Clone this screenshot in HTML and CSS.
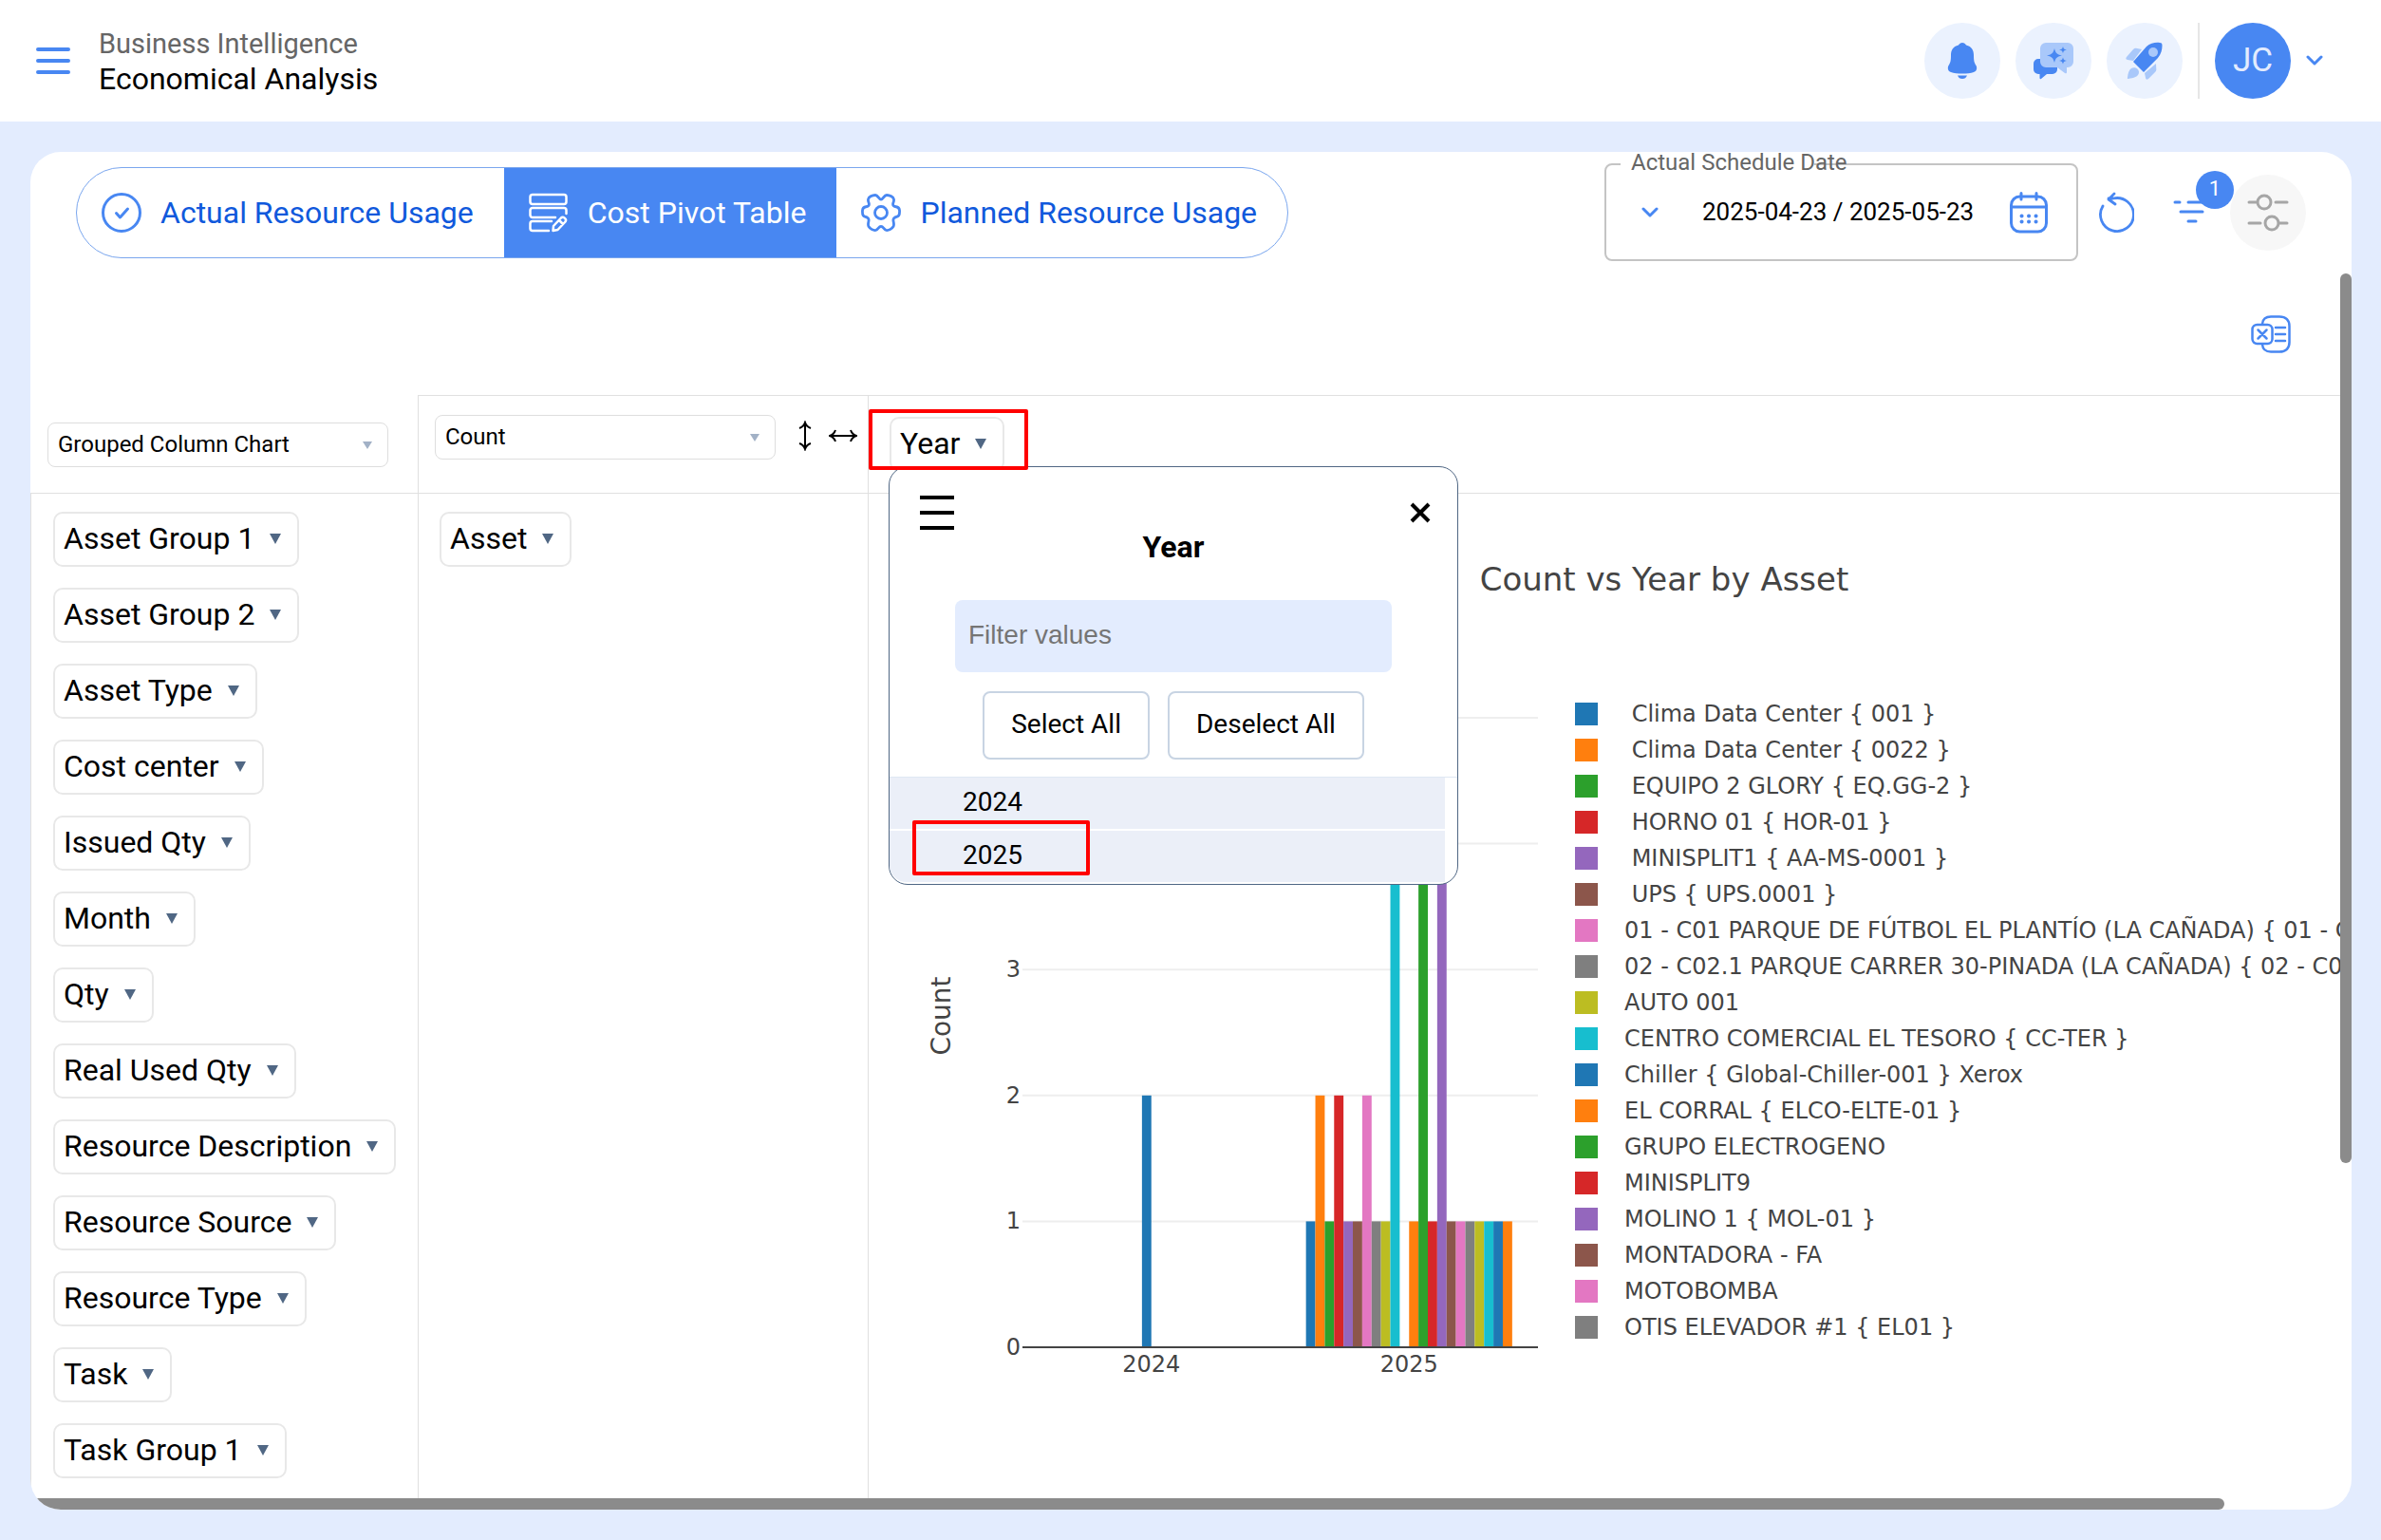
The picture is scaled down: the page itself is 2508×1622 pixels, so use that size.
FILE: index.html
```html
<!DOCTYPE html>
<html lang="en">
<head>
    <meta charset="UTF-8">
    <meta name="viewport" content="width=device-width, initial-scale=1.0">
    <title>Economical Analysis</title>
    <link rel="stylesheet" href="styles.css">
</head>
<body>
<header class="topbar">
    <button type="button" class="icon-btn menu-btn" aria-label="Menu">
        <svg width="36" height="30" viewBox="0 0 36 30" stroke="#4887f2" stroke-width="4" stroke-linecap="round"><path d="M2 3h32M2 15h32M2 27h32"/></svg>
    </button>
    <div class="titles">
        <p class="module">Business Intelligence</p>
        <h1>Economical Analysis</h1>
    </div>
    <div class="top-actions">
        <button type="button" class="round-btn" aria-label="Notifications">
            <svg width="32" height="40" viewBox="0 0 32 40" fill="#4887f2"><path d="M16 1c2 0 3 1 4 2.500C26 5 28 9 28 14c0 6 .5 8 2.500 11C32 28 31 31 28 32c-6 2-18 2-24 0-3-1-4-4-2.500-7C3.500 22 4 20 4 14c0-5 2-9 8-10.500C13 2 14 1 16 1z"/><path d="M11 35.500h10c-1 2.500-2.500 3.500-5 3.500s-4-1-5-3.500z"/></svg>
        </button>
        <button type="button" class="round-btn" aria-label="Assistant">
            <svg width="42" height="40" viewBox="0 0 42 40"><path fill="#4887f2" d="M5 18h15a5 5 0 0 1 5 5v6a5 5 0 0 1-5 5h-6l-6 5c-1 .5-1.500 0-1.500-1v-4H5a5 5 0 0 1-5-5v-6a5 5 0 0 1 5-5z"/><path fill="#a9c8fa" d="M13 1h23a6 6 0 0 1 6 6v14a6 6 0 0 1-6 6h-1v5c0 1.500-1 1.500-2 1l-8-6H13a6 6 0 0 1-6-6V7a6 6 0 0 1 6-6z"/><path fill="#4887f2" d="M22 7c1.500 5 2 6 8 7.500-6 1.500-6.500 2.500-8 7.500-1.500-5-2-6-8-7.500 6-1.500 6.500-2.500 8-7.500zM31 5c.8 2.500 1 3 4 3.500-3 .6-3.200 1-4 3.500-.8-2.500-1-3-4-3.500 3-.5 3.200-1 4-3.500zM31 16.500c.8 2.500 1 3 4 3.500-3 .6-3.200 1-4 3.500-.8-2.500-1-3-4-3.500 3-.5 3.200-1 4-3.500z"/></svg>
        </button>
        <button type="button" class="round-btn" aria-label="What's new">
            <svg width="40" height="40" viewBox="0 0 40 40"><g fill="#a9c8fa"><path d="M17 8L8 20l-6-1c-2-.5-2-1.500-1-3l7-8c1-1 2-1.500 3-1.300z"/><path d="M32 23L20 33l1 5c.5 2 1.500 2 3 1l7-7c1-1 1.500-2 1.300-3z"/><path d="M6 28c3-2 8 0 8 4 0 5-6 6-11 7-1 0-1.300-.5-1-1.500C2.500 33 3.500 29.500 6 28z"/></g><path fill="#4887f2" d="M8 21L22 5c4-4 10-4.500 14-4 2 .2 2.500 1 2.500 3 0 4-1 9-4.500 13L19 32z"/><circle cx="29" cy="11" r="5" fill="#a9c8fa"/></svg>
        </button>
        <span class="divider"></span>
        <button type="button" class="avatar">JC</button>
        <button type="button" class="icon-btn user-btn" aria-label="User menu">
            <svg width="18" height="12" viewBox="0 0 18 12" fill="none" stroke="#4887f2" stroke-width="3" stroke-linecap="round" stroke-linejoin="round"><path d="M2 2l7 7 7-7"/></svg>
        </button>
    </div>
</header>

<main class="page">
    <section class="card">
        <div class="toolbar">
            <nav class="tabs">
                <button type="button" class="tab">
                    <svg width="42" height="44" viewBox="0 0 42 44" fill="none" stroke="#4887f2" stroke-width="3" stroke-linecap="round" stroke-linejoin="round"><circle cx="21" cy="22" r="19.500"/><path d="M15.500 22.500l4 4.500 8-9"/></svg>
                    Actual Resource Usage
                </button>
                <button type="button" class="tab active">
                    <svg width="42" height="42" viewBox="0 0 42 42" fill="none" stroke="#fff" stroke-width="2.500" stroke-linecap="round" stroke-linejoin="round"><rect x="1.500" y="2" width="38" height="10" rx="2.500"/><path d="M28 26H4a2.500 2.500 0 0 1-2.500-2.500v-5A2.500 2.500 0 0 1 4 16h33a2.500 2.500 0 0 1 2.500 2.500V22"/><path d="M24 30H4a2.500 2.500 0 0 0-2.500 2.500v5A2.500 2.500 0 0 0 4 40h17"/><path d="M26 35l8-8.500c2-2 6.500 1 4.500 4l-8 8.500-5 1zM32 29l4 4"/></svg>
                    Cost Pivot Table
                </button>
                <button type="button" class="tab">
                    <svg width="42" height="42" viewBox="0 0 42 42" fill="none" stroke="#4887f2" stroke-width="2.800" stroke-linejoin="round"><circle cx="21" cy="21" r="6.500"/><path d="M21 7c2.500 0 3-4.500 6-4.500 3.500 0 7 2 7.500 4.500.5 3-2 4-.5 6.500s6-.5 6.500 5c.3 4 0 6-2.500 6.700-2 .6-3.500.8-4 2.800-.6 2.500 1.500 4.500 0 7.500-1.500 2.500-5 4.500-7.500 4-2.500-.6-3-4-5.500-4s-3 3.400-5.500 4c-2.500.5-6-1.500-7.500-4-1.500-3 .6-5 0-7.500-.5-2-2-2.200-4-2.800C1.500 24.500 1.200 22.500 1.500 18.500c.5-5.500 5-2.500 6.500-5S7 10 7.500 7C8 4.500 11.500 2.500 15 2.500c3 0 3.500 4.500 6 4.500z"/></svg>
                    Planned Resource Usage
                </button>
            </nav>

            <fieldset class="date-field">
                <legend>Actual Schedule Date</legend>
                <div class="date-row">
                    <button type="button" class="icon-btn" aria-label="Presets">
                        <svg width="18" height="12" viewBox="0 0 18 12" fill="none" stroke="#4887f2" stroke-width="3" stroke-linecap="round" stroke-linejoin="round"><path d="M2 2l7 7 7-7"/></svg>
                    </button>
                    <input type="text" class="date-input" aria-label="Actual Schedule Date" value="2025-04-23 / 2025-05-23">
                    <button type="button" class="icon-btn" aria-label="Calendar">
                        <svg width="40" height="44" viewBox="0 0 40 44" fill="none" stroke="#4887f2" stroke-width="3" stroke-linecap="round"><rect x="1.500" y="5" width="37" height="37" rx="9"/><path d="M2 16h36M12 1.500V8M28 1.500V8"/><path stroke-width="4" d="M12.500 25.500h.1M20 25.500h.1M27.500 25.500h.1M12.500 31.500h.1M20 31.500h.1M27.500 31.500h.1"/></svg>
                    </button>
                </div>
            </fieldset>
            <button type="button" class="tool-btn" aria-label="Refresh">
                <svg width="38" height="44" viewBox="0 0 38 44" fill="none" stroke="#4887f2" stroke-width="2.800" stroke-linecap="round" stroke-linejoin="round"><path d="M5 15A17.500 17.500 0 1 0 16 7l-5 0M17 2l-6 6 7 5"/></svg>
            </button>
            <button type="button" class="tool-btn" aria-label="Filters">
                <svg width="40" height="26" viewBox="0 0 40 26" fill="none" stroke="#4887f2" stroke-width="3" stroke-linecap="round"><path d="M2 2h5M16 2h20M8 12h23M16 22h8"/></svg>
                <span class="badge">1</span>
            </button>
            <button type="button" class="tool-btn settings" aria-label="Settings">
                <svg width="44" height="40" viewBox="0 0 44 40" fill="none" stroke="#a6a6a6" stroke-width="3" stroke-linecap="round"><circle cx="18" cy="9" r="7"/><circle cx="26" cy="31" r="7"/><path d="M2 9h8M30 9h12M2 31h12M34 31h8"/></svg>
            </button>
        </div>

        <div class="scroll-area">
            <div class="content">
                <div class="export-row">
                    <button type="button" class="icon-btn" aria-label="Export to Excel">
                        <svg width="42" height="40" viewBox="0 0 42 40" fill="none" stroke="#4887f2" stroke-width="2.500" stroke-linecap="round" stroke-linejoin="round"><rect x="1.500" y="10" width="21" height="20" rx="5"/><path d="M7.500 15.500l9 9M16.500 15.500l-9 9M12 9c.5-5 4-7.500 9-7.500h9c7 0 10.500 4 10.500 10v17c0 6-3.500 10-10.500 10h-9c-5 0-8.500-2.500-9-7.500M26 13h10M26 20h10M26 27h10"/></svg>
                    </button>
                </div>

                <div class="pivot">
                    <div class="cell renderer-cell">
                        <div class="dropdown">
                            <select aria-label="Renderer"><option>Grouped Column Chart</option></select>
                        </div>
                    </div>
                    <div class="cell vals-cell">
                        <div class="dropdown">
                            <select aria-label="Aggregator"><option>Count</option></select>
                        </div>
                        <button type="button" class="icon-btn" aria-label="Row order">
                            <svg width="14" height="32" viewBox="0 0 14 32" fill="none" stroke="#000" stroke-width="2"><path d="M7 2v28M1 8c3-1 5-3 6-6 1 3 3 5 6 6M1 24c3 1 5 3 6 6 1-3 3-5 6-6"/></svg>
                        </button>
                        <button type="button" class="icon-btn" aria-label="Column order">
                            <svg width="30" height="14" viewBox="0 0 30 14" fill="none" stroke="#000" stroke-width="2"><path d="M1 7h28M7 1C6 4 4 6 1 7c3 1 5 3 6 6M23 1c1 3 3 5 6 6-3 1-5 3-6 6"/></svg>
                        </button>
                    </div>
                    <div class="cell cols-cell">
                        <button type="button" class="attr">Year</button>
                        <div class="filter-box">
                            <div class="filter-head">
                                <svg width="36" height="36" viewBox="0 0 36 36" stroke="#000" stroke-width="4"><path d="M0 2h36M0 18h36M0 34h36"/></svg>
                                <button type="button" class="icon-btn" aria-label="Close">
                                    <svg width="22" height="22" viewBox="0 0 22 22" stroke="#000" stroke-width="4"><path d="M2 2l18 18M20 2L2 20"/></svg>
                                </button>
                            </div>
                            <h4>Year</h4>
                            <input type="text" class="filter-input" placeholder="Filter values" aria-label="Filter values">
                            <div class="filter-btns">
                                <button type="button">Select All</button>
                                <button type="button">Deselect All</button>
                            </div>
                            <ul class="filter-list">
                                <li>2024</li>
                                <li>2025</li>
                            </ul>
                            <span class="mark mark-value"></span>
                        </div>
                        <span class="mark mark-year"></span>
                    </div>

                    <div class="cell unused-cell">
                        <button type="button" class="attr">Asset Group 1</button>
                        <button type="button" class="attr">Asset Group 2</button>
                        <button type="button" class="attr">Asset Type</button>
                        <button type="button" class="attr">Cost center</button>
                        <button type="button" class="attr">Issued Qty</button>
                        <button type="button" class="attr">Month</button>
                        <button type="button" class="attr">Qty</button>
                        <button type="button" class="attr">Real Used Qty</button>
                        <button type="button" class="attr">Resource Description</button>
                        <button type="button" class="attr">Resource Source</button>
                        <button type="button" class="attr">Resource Type</button>
                        <button type="button" class="attr">Task</button>
                        <button type="button" class="attr">Task Group 1</button>
                    </div>
                    <div class="cell rows-cell">
                        <button type="button" class="attr">Asset</button>
                    </div>
                    <div class="cell output-cell">
                        <div class="chart">
                            <h3>Count vs Year by Asset</h3>
                            <div class="chart-body">
                                <svg id="plot" width="744" height="760" viewBox="0 0 744 760"></svg>
                                <ul id="legend" class="legend"></ul>
                            </div>
                        </div>
                    </div>
                </div>
            </div>
            <div class="scroll-y"></div>
            <div class="scroll-x"></div>
        </div>
    </section>
</main>

<script>
    const colors = ['#1f77b4', '#ff7f0e', '#2ca02c', '#d62728', '#9467bd', '#8c564b', '#e377c2', '#7f7f7f', '#bcbd22', '#17becf'];
    const names = [
        ' Clima Data Center { 001 }',
        ' Clima Data Center { 0022 }',
        ' EQUIPO 2 GLORY { EQ.GG-2 }',
        ' HORNO 01 { HOR-01 }',
        ' MINISPLIT1 { AA-MS-0001 }',
        ' UPS { UPS.0001 }',
        '01 - C01 PARQUE DE FÚTBOL EL PLANTÍO (LA CAÑADA) { 01 - C01 }',
        '02 - C02.1 PARQUE CARRER 30-PINADA (LA CAÑADA) { 02 - C02.1 }',
        'AUTO 001',
        'CENTRO COMERCIAL EL TESORO { CC-TER }',
        'Chiller { Global-Chiller-001 } Xerox',
        'EL CORRAL { ELCO-ELTE-01 }',
        'GRUPO ELECTROGENO',
        'MINISPLIT9',
        'MOLINO 1 { MOL-01 }',
        'MONTADORA - FA',
        'MOTOBOMBA',
        'OTIS ELEVADOR #1 { EL01 }'
    ];
    const years = [
        { label: '2024', values: [0, 0, 0, 0, 0, 0, 0, 0, 0, 0, 2, 0, 0, 0, 0, 0, 0, 0, 0, 0, 0, 0] },
        { label: '2025', values: [1, 2, 1, 2, 1, 1, 2, 1, 1, 5, 0, 1, 4, 1, 4, 1, 1, 1, 1, 1, 1, 1] }
    ];

    // the axis labels the range that shows under the filter popup
    const left = 162, right = 705, base = 700, unit = 132.6;
    const band = (right - left) / years.length;
    let out = '';

    for (let i = 1; i <= 5; i++) {
        const y = base - i * unit;
        out += `<line class="grid" x1="${left}" x2="${right}" y1="${y}" y2="${y}"/>`;
    }
    for (let i = 0; i <= 3; i++) {
        out += `<text class="tick" text-anchor="end" x="${left - 2}" y="${base - i * unit + 8}">${i}</text>`;
    }
    years.forEach((year, n) => {
        const barWidth = band * 0.8 / year.values.length;
        year.values.forEach((value, i) => {
            if (!value) return;
            const x = left + band * (n + 0.1) + i * barWidth;
            out += `<rect x="${x}" y="${base - value * unit}" width="${barWidth}" height="${value * unit}" fill="${colors[i % 10]}"/>`;
        });
        out += `<text class="tick" text-anchor="middle" x="${left + band * (n + 0.5)}" y="${base + 26}">${year.label}</text>`;
    });
    out += `<line class="zero" x1="${left}" x2="${right}" y1="${base}" y2="${base}"/>`;
    out += `<text class="axis-title" text-anchor="middle" transform="translate(86 351) rotate(-90)">Count</text>`;
    document.getElementById('plot').innerHTML = out;

    const legend = document.getElementById('legend');
    names.forEach((name, i) => {
        const item = document.createElement('li');
        item.innerHTML = `<span class="swatch" style="background:${colors[i % 10]}"></span>`;
        item.append(name);
        legend.appendChild(item);
    });
</script>
</body>
</html>
```
FILE: styles.css
```css
* {
    box-sizing: border-box;
}
body {
    margin: 0;
    height: 100vh;
    display: flex;
    flex-direction: column;
    overflow: hidden;
    background-color: #e3ecfe;
    color: #000;
    font-family: Roboto, "Liberation Sans", sans-serif;
    font-size: 32px;
}
button, input, select {
    font-family: inherit;
    color: inherit;
}
button {
    cursor: pointer;
}
h1, h3, h4, p, ul {
    margin: 0;
    padding: 0;
    font-weight: 400;
}
ul {
    list-style: none;
}
svg {
    display: block;
    flex: none;
}
.icon-btn {
    padding: 0;
    border: none;
    background: none;
}

/* header */
.topbar {
    display: flex;
    align-items: center;
    height: 128px;
    padding: 0 61px 0 38px;
    background-color: #fff;
}
.titles {
    margin-left: 30px;
    padding-top: 2px;
}
.module {
    color: #666;
    font-size: 29px;
    line-height: 36px;
}
.titles h1 {
    font-size: 32px;
    line-height: 38px;
}
.top-actions {
    display: flex;
    align-items: center;
    gap: 16px;
    margin-left: auto;
}
.round-btn, .avatar {
    display: flex;
    align-items: center;
    justify-content: center;
    width: 80px;
    height: 80px;
    padding: 0;
    border: none;
    border-radius: 50%;
    background-color: #ebf2fe;
}
.avatar {
    padding-bottom: 2px;
    background-color: #4887f2;
    color: #e3ecfe;
    font-size: 35px;
}
.divider {
    width: 2px;
    height: 80px;
    background-color: #e6e6e6;
}

/* card */
.page {
    flex: 1;
    min-height: 0;
    display: flex;
    padding: 32px 31px 32px 32px;
}
.card {
    flex: 1;
    min-width: 0;
    display: flex;
    flex-direction: column;
    border-radius: 32px;
    background-color: #fff;
    overflow: hidden;
}
.toolbar {
    display: flex;
    height: 128px;
    padding: 0 48px;
}
.tabs {
    display: flex;
    height: 96px;
    margin: 16px auto 0 0;
    border: 1px solid #7aa6ee;
    border-radius: 48px;
    overflow: hidden;
}
.tab {
    display: flex;
    align-items: center;
    gap: 20px;
    margin: -1px 0;
    padding: 0 32px 1px 26px;
    border: none;
    background: none;
    color: #1059dc;
    font-size: 32px;
    white-space: nowrap;
}
.tab.active {
    background-color: #4887f2;
    color: #fff;
}
.date-field {
    width: 499px;
    min-width: 0;
    height: 115px;
    margin: 0;
    padding: 0;
    border: 2px solid #c4c4c4;
    border-radius: 8px;
}
.date-field legend {
    width: 204px;
    height: 26px;
    margin-left: 15px;
    padding: 0 0 4px 11px;
    color: #666;
    font-size: 24px;
    line-height: 22px;
    white-space: nowrap;
}
.date-row {
    display: flex;
    align-items: center;
    height: 76px;
    padding: 0 30px 0 37px;
}
.date-input {
    flex: 1;
    min-width: 0;
    padding: 0 0 2px 46px;
    border: none;
    background: none;
    font-size: 26px;
}
.tool-btn {
    position: relative;
    display: flex;
    align-items: center;
    justify-content: center;
    width: 80px;
    height: 80px;
    margin-top: 24px;
    padding: 0;
    border: none;
    border-radius: 50%;
    background: none;
}
.tool-btn.settings {
    background-color: #f7f7f7;
}
.badge {
    position: absolute;
    top: -4px;
    right: -4px;
    width: 40px;
    height: 40px;
    border-radius: 50%;
    background-color: #4887f2;
    color: #fff;
    font-size: 22px;
    line-height: 38px;
    text-align: center;
    z-index: 1;
}

/* scrolled content */
.scroll-area {
    position: relative;
    flex: 1;
    min-height: 0;
    padding: 0 12px 12px 0;
}
.content {
    display: flex;
    flex-direction: column;
    height: 100%;
    overflow: hidden;
}
.export-row {
    display: flex;
    align-items: center;
    justify-content: flex-end;
    flex: none;
    height: 128px;
    padding-right: 52px;
}
.scroll-y, .scroll-x {
    position: absolute;
    background-color: #8b8b8b;
    border-radius: 6px;
}
.scroll-y {
    top: 0;
    right: 0;
    width: 12px;
    height: 72%;
}
.scroll-x {
    left: 0;
    bottom: 0;
    width: 94.5%;
    height: 12px;
}

/* pivot table */
.pivot {
    flex: 1;
    min-height: 0;
    display: grid;
    grid-template-columns: 408px 474px minmax(0, 1fr);
    grid-template-rows: 103px minmax(0, 1fr);
}
.cell {
    border-top: 1px solid #e0e0e0;
    border-left: 1px solid #e0e0e0;
}
.renderer-cell {
    padding: 28px 17px 0;
    border-color: transparent;
}
.vals-cell {
    display: flex;
    align-items: flex-start;
    padding: 20px 10px 0 17px;
}
.vals-cell .dropdown {
    flex: none;
    margin-right: 24px;
}
.vals-cell .icon-btn {
    display: flex;
    align-items: center;
    height: 44px;
    margin-right: 18px;
}
.vals-cell .icon-btn:last-child {
    margin-right: 0;
}
.cols-cell {
    position: relative;
    padding: 22px;
}
.unused-cell, .rows-cell {
    display: flex;
    flex-direction: column;
    align-items: flex-start;
    gap: 22px;
    padding: 19px 23px;
}
.rows-cell {
    padding-left: 22px;
}
.dropdown {
    position: relative;
    width: 359px;
}
.dropdown select {
    display: block;
    width: 100%;
    height: 47px;
    padding: 0 40px 2px 10px;
    border: 1px solid #dedede;
    border-radius: 8px;
    background: #fff;
    font-size: 24px;
    appearance: none;
}
.dropdown::after {
    content: '';
    position: absolute;
    top: 20px;
    right: 17px;
    border-width: 8px 5px 0;
    border-style: solid;
    border-color: #a2b1c6 transparent transparent;
}
.attr {
    display: flex;
    align-items: center;
    height: 58px;
    padding: 0 17px 2px 9px;
    border: 2px solid #e8e8e8;
    border-radius: 10px;
    background: #fff;
    font-size: 32px;
    white-space: nowrap;
}
.attr::after {
    content: '';
    margin-left: 16px;
    border-width: 11px 6px 0;
    border-style: solid;
    border-color: #506784 transparent transparent;
}

/* value filter popup */
.filter-box {
    position: absolute;
    top: 74px;
    left: 21px;
    z-index: 2;
    width: 600px;
    border: 1px solid #506784;
    border-radius: 20px;
    background-color: #fff;
    text-align: center;
}
.filter-head {
    display: flex;
    align-items: center;
    justify-content: space-between;
    padding: 30px 28px 0 32px;
}
.filter-box h4 {
    font-size: 32px;
    font-weight: 700;
    line-height: 36px;
}
.filter-input {
    width: 460px;
    height: 76px;
    margin-top: 38px;
    padding: 0 14px 3px;
    border: none;
    border-radius: 8px;
    background-color: #e3ecfe;
    font-family: "Liberation Sans", Arial, sans-serif;
    font-size: 28px;
}
.filter-input::placeholder {
    color: #757575;
}
.filter-btns {
    display: flex;
    justify-content: center;
    gap: 19px;
    margin: 20px 0 18px;
}
.filter-btns button {
    height: 72px;
    padding: 0 28px 4px;
    border: 2px solid #c8d4e3;
    border-radius: 8px;
    background: #fff;
    font-size: 28px;
}
.filter-list {
    padding-right: 13px;
    border-top: 1px solid #dfe8f3;
}
.filter-list li {
    height: 54px;
    margin-bottom: 2px;
    padding-left: 77px;
    background-color: #ebeff8;
    font-size: 28px;
    line-height: 52px;
    text-align: left;
}
.filter-list li:last-child {
    border-radius: 0 0 0 18px;
}

/* red highlight frames */
.mark {
    position: absolute;
    z-index: 3;
    border: 4px solid #f00;
    border-radius: 2px;
}
.mark-year {
    top: 14px;
    left: 0;
    width: 168px;
    height: 64px;
}
.mark-value {
    bottom: 9px;
    left: 24px;
    width: 187px;
    height: 58px;
}

/* chart */
.output-cell {
    overflow: hidden;
}
.chart {
    width: 1676px;
    color: #444;
    font-family: Verdana, "DejaVu Sans", sans-serif;
}
.chart h3 {
    height: 199px;
    padding-top: 68px;
    font-size: 34px;
    line-height: 44px;
    text-align: center;
}
.chart-body {
    display: flex;
    align-items: flex-start;
}
.grid {
    stroke: #eee;
    stroke-width: 2;
}
.zero {
    stroke: #444;
    stroke-width: 2;
}
.tick {
    fill: #444;
    font-size: 24px;
}
.axis-title {
    fill: #444;
    font-size: 28px;
}
.legend {
    padding-top: 14px;
    font-size: 24px;
    line-height: 38px;
}
.legend li {
    display: flex;
    align-items: center;
    white-space: pre;
}
.swatch {
    flex: none;
    width: 24px;
    height: 24px;
    margin-right: 28px;
}
```
